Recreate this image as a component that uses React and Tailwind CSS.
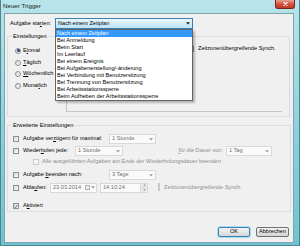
import React from "react";

const U = ({ children }) => (
  <span className="underline decoration-[0.5px] underline-offset-[1px]">{children}</span>
);

function Box({ checked = false, disabled = false }) {
  return (
    <span
      className={
        disabled
          ? "w-[6px] h-[6px] shrink-0 border border-[#cacaca] bg-[#f6f6f6]"
          : "w-[6px] h-[6px] shrink-0 border border-[#8e8f8f] bg-gradient-to-br from-[#d3d7dc] to-[#fbfbfb] flex items-center justify-center"
      }
    >
      {checked && (
        <svg width="5" height="5" viewBox="0 0 5 5">
          <path d="M0.7 2.4 L2 3.9 L4.4 0.8" fill="none" stroke="#33518c" strokeWidth="1" />
        </svg>
      )}
    </span>
  );
}

function Radio({ on = false }) {
  return (
    <span className="w-[6px] h-[6px] rounded-full shrink-0 border border-[#8e8f8f] bg-gradient-to-br from-[#d3d7dc] to-[#fbfbfb] flex items-center justify-center">
      {on && <span className="w-[3px] h-[3px] rounded-full bg-[#23457c]" />}
    </span>
  );
}

function Arrow({ color = "#9a9a9a" }) {
  return (
    <svg width="4" height="3" viewBox="0 0 4 3" className="shrink-0">
      <path d="M0 0.3 H4 L2 2.6Z" fill={color} />
    </svg>
  );
}

function Combo({ className, text }) {
  return (
    <div
      className={
        "h-[10px] border border-[#d9d9d9] bg-[#fafafa] flex items-center justify-between pl-[2px] pr-[2px] text-[#6f6f6f] " +
        className
      }
    >
      <span>{text}</span>
      <Arrow />
    </div>
  );
}

const items = [
  "Nach einem Zeitplan",
  "Bei Anmeldung",
  "Beim Start",
  "Im Leerlauf",
  "Bei einem Ereignis",
  "Bei Aufgabenerstellung/-änderung",
  "Bei Verbindung mit Benutzersitzung",
  "Bei Trennung von Benutzersitzung",
  "Bei Arbeitsstationssperre",
  "Beim Aufheben der Arbeitsstationssperre",
];

export default function App() {
  return (
    <div className="w-[300px] h-[246px] overflow-hidden font-['Liberation_Sans',Arial,sans-serif] text-[5.6px] leading-none text-black bg-gradient-to-b from-[#b9e4eb] via-[#8fd2dd] to-[#6fc3d0] flex flex-col border-x border-b border-[#4b8793]">
      {/* title bar */}
      <div className="h-[13px] shrink-0 flex items-start">
        <span className="pl-[2px] pt-[3px] text-[6.2px] leading-[6px] text-[#1b1b1b]">Neuer Trigger</span>
        <div className="ml-auto mr-[4px] w-[20px] h-[9px] rounded-b-[3px] border border-t-0 border-[#7a2418] bg-gradient-to-b from-[#e9a091] via-[#d2513d] to-[#c03a25] flex items-center justify-center">
          <svg width="5" height="4" viewBox="0 0 5 4">
            <path d="M0.5 0.3 L4.5 3.7 M4.5 0.3 L0.5 3.7" stroke="#ffffff" strokeWidth="1.1" />
          </svg>
        </div>
      </div>

      {/* client */}
      <div className="ml-[3px] w-[290px] h-[230px] shrink-0 border border-[#7fa4ab] bg-[#f0f0f0] flex flex-col">
        {/* Aufgabe starten */}
        <div className="mt-[4px] pl-[5px] h-[11px] flex items-center">
          <span className="w-[45px]">
            Aufgabe sta<U>r</U>ten:
          </span>
          <div className="relative z-10 w-[138px] h-[11px]">
            <div className="h-[11px] border border-[#3c7fb1] bg-gradient-to-b from-[#eaf6fd] to-[#bde3f8] flex items-center justify-between pl-[2px] pr-[2px]">
              <span>Nach einem Zeitplan</span>
              <Arrow color="#1a1a1a" />
            </div>
            <div className="absolute left-0 top-full w-[138px] h-[72px] bg-white border border-[#646464] shadow-[2px_2px_2px_rgba(0,0,0,0.25)] flex flex-col">
              {items.map((t, i) => (
                <div
                  key={t}
                  className={
                    i === 0
                      ? "h-[7px] shrink-0 flex items-center pl-[1px] bg-[#3399ff] text-white whitespace-nowrap"
                      : "h-[7px] shrink-0 flex items-center pl-[1px] whitespace-nowrap"
                  }
                >
                  {t}
                </div>
              ))}
            </div>
          </div>
        </div>

        {/* Einstellungen */}
        <fieldset className="mt-[4px] ml-[2px] w-[283px] h-[84px] border border-[#d5dfe5]">
          <legend className="ml-[4px] px-[1px] leading-[6px]">Einstellungen</legend>
          <div className="flex">
            <div className="w-[58px] flex flex-col pt-[6px] pl-[7px]">
              {[
                [<>E<U>i</U>nmal</>, true],
                [<><U>T</U>äglich</>, false],
                [<><U>W</U>öchentlich</>, false],
                [<>Monat<U>l</U>ich</>, false],
              ].map(([label, on], i) => (
                <div key={i} className="h-[11.7px] flex items-center gap-[2px] whitespace-nowrap">
                  <Radio on={on} />
                  <span>{label}</span>
                </div>
              ))}
            </div>
            <div className="mt-[3px] h-[70px] w-[216px] border-l border-b border-[#c6c6c6]">
              <div className="mt-[3px] h-[8px] flex items-center pl-[3px]">
                <span className="w-[20px]" />
                <div className="ml-[2px] w-[44px] h-[8px] border border-[#abadb3] bg-white" />
                <div className="ml-[3px] w-[44px] h-[8px] border border-[#abadb3] bg-white" />
                <span className="ml-[5px]">
                  <Box />
                </span>
                <span className="ml-[4px] whitespace-nowrap">Zeitzonenübergreifende Synch.</span>
              </div>
            </div>
          </div>
        </fieldset>

        {/* Erweiterte Einstellungen */}
        <fieldset className="mt-[5px] ml-[2px] w-[284px] h-[90px] border border-[#d5dfe5]">
          <legend className="ml-[4px] px-[1px] leading-[6px]">Erweiterte Einstellungen</legend>
          <div className="flex flex-col pl-[5px]">
            <div className="mt-[6px] h-[10px] flex items-center">
              <Box />
              <span className="ml-[4px] w-[86px] whitespace-nowrap">
                Aufgabe ver<U>z</U>ögern für maximal:
              </span>
              <Combo className="w-[47px]" text="1 Stunde" />
            </div>
            <div className="mt-[2px] h-[10px] flex items-center">
              <Box />
              <span className="ml-[4px] w-[52px] whitespace-nowrap">
                Wieder<U>h</U>olen jede:
              </span>
              <Combo className="w-[48px]" text="1 Stunde" />
              <span className="w-[103px] text-right pr-[3px] text-[#8d8d8d] whitespace-nowrap">
                <U>f</U>ür die Dauer von:
              </span>
              <Combo className="w-[46px]" text="1 Tag" />
            </div>
            <div className="mt-[1px] h-[10px] flex items-center pl-[20px]">
              <Box disabled />
              <span className="ml-[3px] text-[#8d8d8d] whitespace-nowrap">
                Alle ausgeführten Aufgaben am Ende der Wiederholungsdauer beenden
              </span>
            </div>
            <div className="mt-[3px] h-[10px] flex items-center">
              <Box />
              <span className="ml-[4px] w-[86px] whitespace-nowrap">
                Aufgabe <U>b</U>eenden nach:
              </span>
              <Combo className="w-[47px]" text="3 Tage" />
            </div>
            <div className="mt-[2.5px] h-[10px] flex items-center">
              <Box />
              <span className="ml-[4px] w-[27px] whitespace-nowrap">
                Abla<U>u</U>fen:
              </span>
              <div className="w-[47px] h-[10px] border border-[#d9d9d9] bg-[#fafafa] flex items-center justify-between pl-[2px] pr-[1px] text-[#6f6f6f]">
                <span>23.03.2014</span>
                <span className="flex items-center gap-[1px]">
                  <span className="w-[5px] h-[5px] border border-[#b5b5b5] bg-[#ececec]" />
                  <Arrow />
                </span>
              </div>
              <div className="ml-[3px] w-[48px] h-[10px] border border-[#d9d9d9] bg-[#fafafa] flex items-center justify-between pl-[2px] text-[#6f6f6f]">
                <span>14:10:24</span>
                <span className="w-[7px] h-full border-l border-[#dadada] flex flex-col">
                  <span className="flex-1 bg-[#ececec] border-b border-[#dadada] flex items-center justify-center">
                    <svg width="3" height="2" viewBox="0 0 3 2"><path d="M0 2 L1.5 0 L3 2Z" fill="#a5a5a5" /></svg>
                  </span>
                  <span className="flex-1 bg-[#ececec] flex items-center justify-center">
                    <svg width="3" height="2" viewBox="0 0 3 2"><path d="M0 0 L1.5 2 L3 0Z" fill="#a5a5a5" /></svg>
                  </span>
                </span>
              </div>
              <span className="ml-[10px]">
                <Box disabled />
              </span>
              <span className="ml-[4px] text-[#8d8d8d] whitespace-nowrap">Zeitzonenübergreifende Synch.</span>
            </div>
            <div className="mt-[8.5px] h-[10px] flex items-center">
              <Box checked />
              <span className="ml-[4px]">
                A<U>k</U>tiviert
              </span>
            </div>
          </div>
        </fieldset>

        {/* buttons */}
        <div className="mt-[15px] flex justify-end gap-[6px] pr-[4px]">
          <div className="w-[32px] h-[10px] rounded-[2px] border border-[#3c7fb1] bg-gradient-to-b from-[#f2f2f2] via-[#e6e6e6] to-[#d2d6da] shadow-[0_0_0_1px_#a9dcf5] flex items-center justify-center">
            OK
          </div>
          <div className="w-[33px] h-[10px] rounded-[2px] border border-[#707070] bg-gradient-to-b from-[#f2f2f2] via-[#e6e6e6] to-[#d3d3d3] flex items-center justify-center">
            Abbrechen
          </div>
        </div>
      </div>
    </div>
  );
}
